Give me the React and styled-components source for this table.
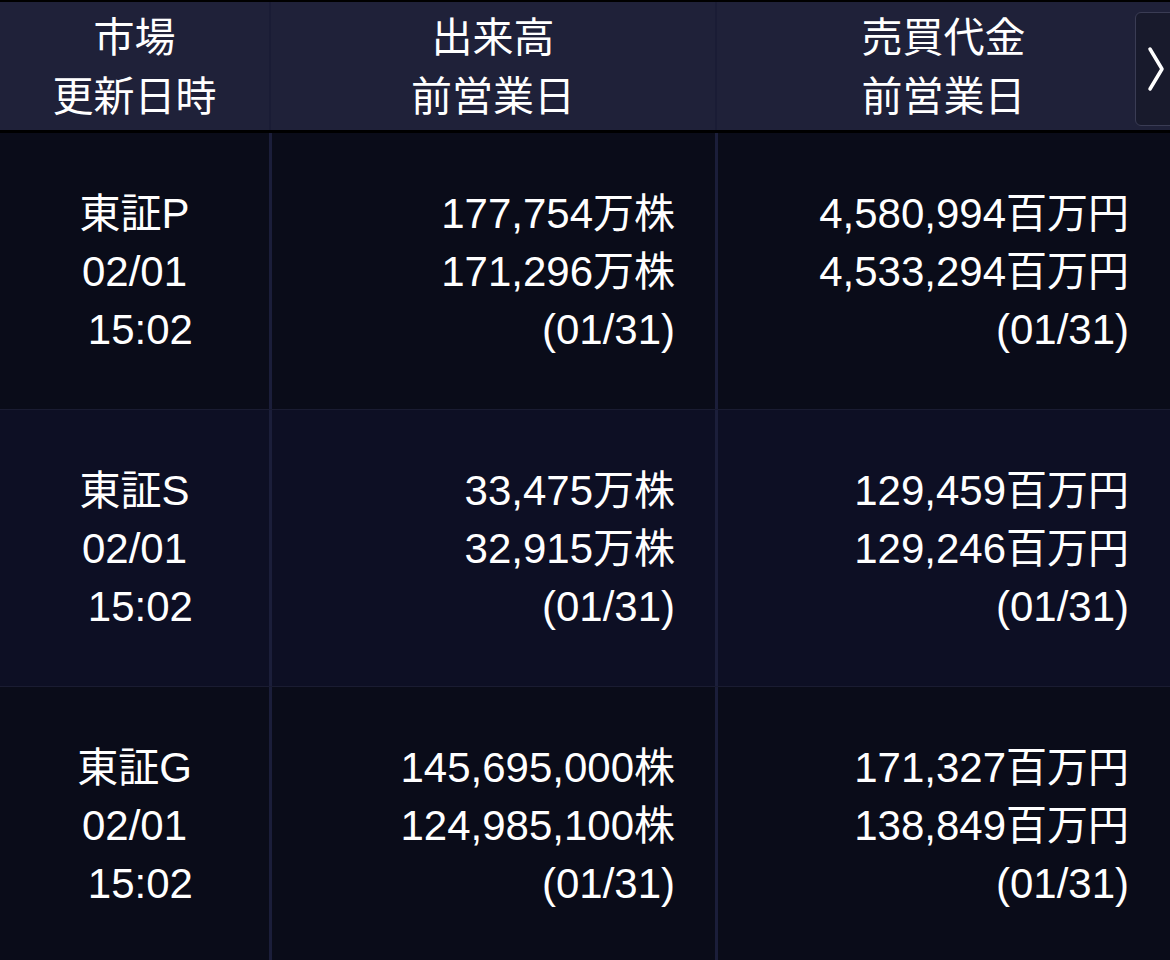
import React from 'react';
import styled, { createGlobalStyle } from 'styled-components';

const GlobalStyle = createGlobalStyle`
  html, body {
    margin: 0;
    padding: 0;
    background: #0a0c19;
  }
  body {
    font-family: "Liberation Sans", "Noto Sans CJK JP", sans-serif;
    color: #ffffff;
  }
`;

const COLS = '269px 446px 1fr';

const Screen = styled.div`
  width: 1170px;
  height: 960px;
  overflow: hidden;
  position: relative;
  background: #0a0c19;
  border-top: 2px solid #000;
  box-sizing: border-box;
`;

const HeaderRow = styled.div`
  display: grid;
  grid-template-columns: ${COLS};
  height: 128px;
  background: #1f2139;
  border-bottom: 3px solid #000;
`;

const HeaderCell = styled.div`
  display: flex;
  flex-direction: column;
  justify-content: center;
  align-items: center;
  padding-bottom: 5px;
  border-left: ${(p) => (p.first ? 'none' : '2px solid #1a1c35')};
`;

const HeaderLine = styled.div`
  font-family: "Noto Sans CJK JP", sans-serif;
  font-size: 41px;
  height: 59px;
  line-height: 59px;
`;

const DataRow = styled.div`
  display: grid;
  grid-template-columns: ${COLS};
  height: 276px;
  background: ${(p) => (p.alt ? '#0d0f24' : '#0a0c19')};
  border-bottom: 1px solid #1a1c32;
`;

const Cell = styled.div`
  display: flex;
  flex-direction: column;
  align-items: ${(p) => (p.center ? 'center' : 'flex-end')};
  padding: 52px ${(p) => (p.center ? '0' : p.pr)} 0 0;
  font-size: 42px;
  white-space: pre;
  border-left: ${(p) => (p.center ? 'none' : '3px solid #1b1e3a')};
`;

const Line = styled.div`
  height: 58px;
  line-height: 58px;
`;

const Kanji = styled.span`
  font-family: "Noto Sans CJK JP", sans-serif;
  font-size: 41px;
  line-height: 1;
`;

const NextButton = styled.div`
  position: absolute;
  top: 10px;
  left: 1135px;
  width: 50px;
  height: 114px;
  box-sizing: border-box;
  border: 1px solid #3a3c54;
  border-radius: 6px;
  background: #181a2c;
  display: flex;
  align-items: center;
  padding-left: 10px;
`;

const rows = [
  {
    market: '東証P',
    volume: ['177,754', '171,296'],
    volumeUnit: '万株',
    value: ['4,580,994', '4,533,294'],
  },
  {
    market: '東証S',
    volume: ['33,475', '32,915'],
    volumeUnit: '万株',
    value: ['129,459', '129,246'],
    alt: true,
  },
  {
    market: '東証G',
    volume: ['145,695,000', '124,985,100'],
    volumeUnit: '株',
    value: ['171,327', '138,849'],
  },
];

const headers = [
  ['市場', '更新日時'],
  ['出来高', '前営業日'],
  ['売買代金', '前営業日'],
];

export default function App() {
  return (
    <>
      <GlobalStyle />
      <Screen>
        <HeaderRow>
          {headers.map(([top, bottom], i) => (
            <HeaderCell key={top} first={i === 0}>
              <HeaderLine>{top}</HeaderLine>
              <HeaderLine>{bottom}</HeaderLine>
            </HeaderCell>
          ))}
        </HeaderRow>
        {rows.map((r) => (
          <DataRow key={r.market} alt={r.alt}>
            <Cell center>
              <Line>
                <Kanji>{r.market.slice(0, 2)}</Kanji>
                {r.market.slice(2)}
              </Line>
              <Line>02/01</Line>
              <Line>{' 15:02'}</Line>
            </Cell>
            <Cell pr="40px">
              {r.volume.map((v) => (
                <Line key={v}>
                  {v}
                  <Kanji>{r.volumeUnit}</Kanji>
                </Line>
              ))}
              <Line>(01/31)</Line>
            </Cell>
            <Cell pr="41px">
              {r.value.map((v) => (
                <Line key={v}>
                  {v}
                  <Kanji>百万円</Kanji>
                </Line>
              ))}
              <Line>(01/31)</Line>
            </Cell>
          </DataRow>
        ))}
        <NextButton>
          <svg width="20" height="46" viewBox="0 0 20 46">
            <path d="M4 3 L16 23 L4 43" fill="none" stroke="#fff" strokeWidth="3.5" strokeLinecap="round" strokeLinejoin="round" />
          </svg>
        </NextButton>
      </Screen>
    </>
  );
}
